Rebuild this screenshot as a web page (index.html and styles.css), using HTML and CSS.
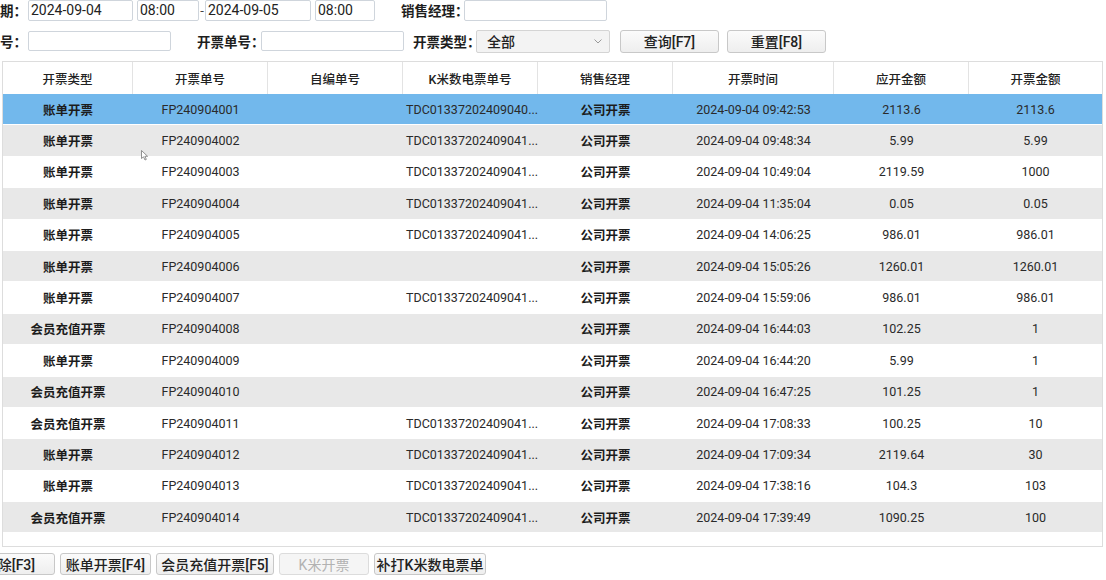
FILE: index.html
```html
<!DOCTYPE html>
<html lang="zh-CN">
<head>
<meta charset="utf-8">
<title>开票查询</title>
<link rel="stylesheet" href="styles.css">
</head>
<body>
<div class="filters">
  <div class="frow frow1">
    <span class="lbl w28">期：</span>
    <div class="inp w105">2024-09-04</div>
    <div class="inp w62 ml4">08:00</div>
    <span class="dash">-</span>
    <div class="inp w106">2024-09-05</div>
    <div class="inp w60 ml4">08:00</div>
    <span class="lbl w63 ml26">销售经理：</span>
    <div class="inp w143"></div>
  </div>
  <div class="frow frow2">
    <span class="lbl w28">号：</span>
    <div class="inp w143 h20"></div>
    <span class="lbl w64 ml26">开票单号：</span>
    <div class="inp w143 h20"></div>
    <span class="lbl w63 ml9">开票类型：</span>
    <div class="sel">
      <span>全部</span>
      <svg class="chev" width="8" height="5" viewBox="0 0 8 5"><path d="M0.5 0.5 L4 4 L7.5 0.5" fill="none" stroke="#9a9a9a" stroke-width="1"/></svg>
    </div>
    <button class="btn tbtn ml10">查询[F7]</button>
    <button class="btn tbtn ml8">重置[F8]</button>
  </div>
</div>

<div class="grid">
  <div class="head">
    <div class="hc">开票类型</div>
    <div class="hc">开票单号</div>
    <div class="hc">自编单号</div>
    <div class="hc">K米数电票单号</div>
    <div class="hc">销售经理</div>
    <div class="hc">开票时间</div>
    <div class="hc">应开金额</div>
    <div class="hc last">开票金额</div>
  </div>
  <div class="body">
    <div class="row sel-row"><div class="c b">账单开票</div><div class="c">FP240904001</div><div class="c"></div><div class="c ell">TDC01337202409040...</div><div class="c b">公司开票</div><div class="c">2024-09-04 09:42:53</div><div class="c">2113.6</div><div class="c">2113.6</div></div>
    <div class="row alt"><div class="c b">账单开票</div><div class="c">FP240904002</div><div class="c"></div><div class="c ell">TDC01337202409041...</div><div class="c b">公司开票</div><div class="c">2024-09-04 09:48:34</div><div class="c">5.99</div><div class="c">5.99</div></div>
    <div class="row"><div class="c b">账单开票</div><div class="c">FP240904003</div><div class="c"></div><div class="c ell">TDC01337202409041...</div><div class="c b">公司开票</div><div class="c">2024-09-04 10:49:04</div><div class="c">2119.59</div><div class="c">1000</div></div>
    <div class="row alt"><div class="c b">账单开票</div><div class="c">FP240904004</div><div class="c"></div><div class="c ell">TDC01337202409041...</div><div class="c b">公司开票</div><div class="c">2024-09-04 11:35:04</div><div class="c">0.05</div><div class="c">0.05</div></div>
    <div class="row"><div class="c b">账单开票</div><div class="c">FP240904005</div><div class="c"></div><div class="c ell">TDC01337202409041...</div><div class="c b">公司开票</div><div class="c">2024-09-04 14:06:25</div><div class="c">986.01</div><div class="c">986.01</div></div>
    <div class="row alt"><div class="c b">账单开票</div><div class="c">FP240904006</div><div class="c"></div><div class="c ell"></div><div class="c b">公司开票</div><div class="c">2024-09-04 15:05:26</div><div class="c">1260.01</div><div class="c">1260.01</div></div>
    <div class="row"><div class="c b">账单开票</div><div class="c">FP240904007</div><div class="c"></div><div class="c ell">TDC01337202409041...</div><div class="c b">公司开票</div><div class="c">2024-09-04 15:59:06</div><div class="c">986.01</div><div class="c">986.01</div></div>
    <div class="row alt"><div class="c b">会员充值开票</div><div class="c">FP240904008</div><div class="c"></div><div class="c ell"></div><div class="c b">公司开票</div><div class="c">2024-09-04 16:44:03</div><div class="c">102.25</div><div class="c">1</div></div>
    <div class="row"><div class="c b">账单开票</div><div class="c">FP240904009</div><div class="c"></div><div class="c ell"></div><div class="c b">公司开票</div><div class="c">2024-09-04 16:44:20</div><div class="c">5.99</div><div class="c">1</div></div>
    <div class="row alt"><div class="c b">会员充值开票</div><div class="c">FP240904010</div><div class="c"></div><div class="c ell"></div><div class="c b">公司开票</div><div class="c">2024-09-04 16:47:25</div><div class="c">101.25</div><div class="c">1</div></div>
    <div class="row"><div class="c b">会员充值开票</div><div class="c">FP240904011</div><div class="c"></div><div class="c ell">TDC01337202409041...</div><div class="c b">公司开票</div><div class="c">2024-09-04 17:08:33</div><div class="c">100.25</div><div class="c">10</div></div>
    <div class="row alt"><div class="c b">账单开票</div><div class="c">FP240904012</div><div class="c"></div><div class="c ell">TDC01337202409041...</div><div class="c b">公司开票</div><div class="c">2024-09-04 17:09:34</div><div class="c">2119.64</div><div class="c">30</div></div>
    <div class="row"><div class="c b">账单开票</div><div class="c">FP240904013</div><div class="c"></div><div class="c ell">TDC01337202409041...</div><div class="c b">公司开票</div><div class="c">2024-09-04 17:38:16</div><div class="c">104.3</div><div class="c">103</div></div>
    <div class="row alt"><div class="c b">会员充值开票</div><div class="c">FP240904014</div><div class="c"></div><div class="c ell">TDC01337202409041...</div><div class="c b">公司开票</div><div class="c">2024-09-04 17:39:49</div><div class="c">1090.25</div><div class="c">100</div></div>
    <svg class="cursor" width="8" height="11" viewBox="0 0 8 11"><path d="M0.5 0.5 L0.5 8.5 L2.5 6.8 L4 10 L5.3 9.4 L3.9 6.3 L6.6 6.3 Z" fill="#fff" stroke="#777" stroke-width="0.8"/></svg>
  </div>
</div>

<div class="actions">
  <button class="btn abtn first">删除[F3]</button>
  <button class="btn abtn aw91">账单开票[F4]</button>
  <button class="btn abtn aw118">会员充值开票[F5]</button>
  <button class="btn abtn aw90 dis">K米开票</button>
  <button class="btn abtn aw112">补打K米数电票单</button>
</div>
</body>
</html>
```

FILE: styles.css
```css
* { box-sizing: border-box; }
html, body { margin: 0; padding: 0; background: #fff; }
body {
  font-family: Roboto, "Noto Sans CJK SC", sans-serif;
  color: #222;
  width: 1106px;
  height: 580px;
  overflow: hidden;
}

/* filter bar */
.filters { display: flex; flex-direction: column; }
.frow { display: flex; align-items: center; }
.frow1 { height: 20px; }
.frow2 { height: 24px; margin-top: 9px; }

.lbl {
  font-size: 13.5px;
  font-weight: 700;
  color: #1e1e1e;
  white-space: nowrap;
  font-family: Roboto, "Noto Sans CJK SC", sans-serif;
}
.dash { width: 6px; text-align: center; font-size: 13px; color: #444; }

.inp {
  height: 21px;
  border: 1px solid #cfd5dc;
  border-radius: 2px;
  background: #fff;
  font-size: 14px;
  color: #222;
  padding-left: 2px;
  display: flex;
  align-items: center;
  white-space: nowrap;
}
.h20 { height: 20px; }

.w28 { width: 28px; }
.w60 { width: 60px; }
.w62 { width: 62px; }
.w63 { width: 63px; }
.w64 { width: 64px; }
.w105 { width: 105px; }
.w106 { width: 106px; }
.w143 { width: 143px; }
.ml4 { margin-left: 4px; }
.ml8 { margin-left: 8px; }
.ml9 { margin-left: 9px; }
.ml10 { margin-left: 10px; }
.ml26 { margin-left: 26px; }

.sel {
  width: 134px;
  height: 23px;
  border: 1px solid #d4d4d4;
  border-radius: 2px;
  background: #f3f3f3;
  display: flex;
  align-items: center;
  justify-content: space-between;
  padding: 0 7px 0 10px;
  font-size: 14px;
  font-weight: 500;
  color: #222;
}
.chev { display: block; }

.btn {
  height: 23px;
  border: 1px solid #c8c8c8;
  border-radius: 3px;
  background: linear-gradient(#fbfbfb, #eeeeee);
  font-family: Roboto, "Noto Sans CJK SC", sans-serif;
  font-size: 14px;
  font-weight: 500;
  color: #222;
  display: flex;
  align-items: center;
  justify-content: center;
  padding: 0 2px;
  white-space: nowrap;
  margin-top: 0;
  margin-bottom: 0;
}
.tbtn { width: 99px; }

/* grid */
.grid {
  margin: 8px 0 0 2px;
  width: 1101px;
  height: 486px;
  border: 1px solid #dddddd;
  background: #fff;
}
.head, .row {
  display: grid;
  grid-template-columns: 130px 135px 135px 135px 135px 161px 135px 133px;
}
.head { height: 32px; }
.hc {
  border-right: 1px solid #e3e3e3;
  display: flex;
  align-items: center;
  justify-content: center;
  font-size: 12.5px;
  font-weight: 500;
  color: #222;
}
.hc.last { border-right: none; }

.body { position: relative; }
.row {
  height: 30.4px;
  margin-bottom: 1px;
  background: #fff;
}
.row.alt { background: #e8e8e8; }
.row.sel-row { background: #72b8ec; }
.c {
  display: flex;
  align-items: center;
  justify-content: center;
  font-size: 12.5px;
  color: #2a2a2a;
  white-space: nowrap;
}
.c.b { font-weight: 700; color: #1c1c1c; }
.c.ell {
  justify-content: flex-start;
  padding-left: 3px;
}

.cursor { position: absolute; left: 138px; top: 56px; }

/* action buttons */
.actions {
  display: flex;
  gap: 5px;
  margin-top: 6px;
  height: 23px;
}
.abtn { height: 22px; }
.first { width: 91px; margin-left: -36px; }
.aw91 { width: 91px; }
.aw118 { width: 118px; }
.aw90 { width: 90px; }
.aw112 { width: 112px; }
.dis { color: #b2b2b2; border-color: #dcdcdc; background: #f5f5f5; font-weight: 400; }
```
